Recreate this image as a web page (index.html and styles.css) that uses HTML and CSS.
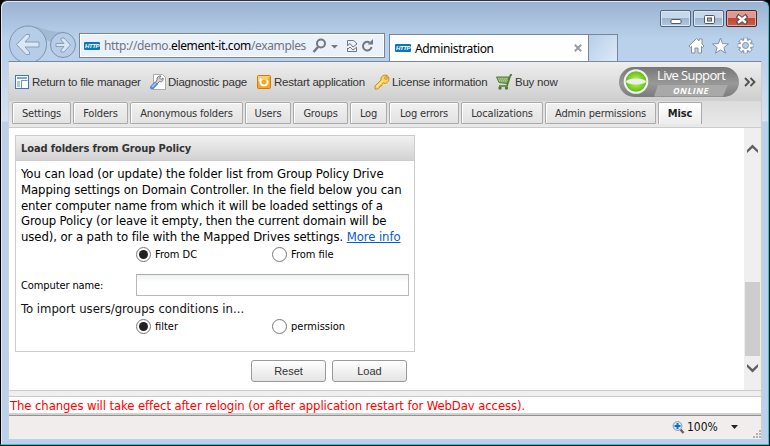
FILE: index.html
```html
<!DOCTYPE html>
<html lang="en">
<head>
<meta charset="utf-8">
<title>Administration</title>
<link rel="stylesheet" href="styles.css">
</head>
<body>
<div class="window">
  <header class="chrome">
    <div class="nav">
      <svg class="navbtns" width="70" height="36" viewBox="0 0 70 36">
        <path d="M27 1 Q42 7 56 7 L45 18 36 14Z" fill="#9cb5cf" opacity=".8"/>
        <g stroke="#8193a8" fill="#b5cde8">
          <circle cx="20" cy="19.500" r="18.500"/><circle cx="55" cy="20" r="12.500"/>
        </g>
        <g fill="#d9e6f5" stroke="#8b9db3" stroke-linejoin="round">
          <path d="M8.500 19.500 L18 9.500 L21.500 9.500 L21.500 12 L17 17 H31 V22 H17 L21.500 27 V29.500 H18Z"/>
          <path d="M62.500 20 L56 13 H53 V15 L56 18.500 H48 V21.500 H56 L53 25 V27 H56Z"/>
        </g>
      </svg>
      <div class="address">
        <span class="http">HTTP</span>
        <span class="url">http://demo.<b>element-it.com</b>/examples</span>
        <svg width="64" height="22" viewBox="0 0 64 22" fill="none" stroke="#74777c">
          <circle cx="9" cy="8.500" r="4" stroke-width="2"/><path d="M6 12 L1.500 17" stroke-width="2.500"/>
          <path d="M19 10 H26 L22.500 13.500Z" fill="#74777c" stroke="none"/>
          <path d="M35.500 10V5.500H41.500L44.500 8V10M35.500 13V16.500H44.500V13"/><path d="M35 11 L38 8.500 41 12 45 9M35 15 L38 12 41 15 45 12"/>
          <path d="M57.500 7.500 A4.300 4.300 0 1 0 59.500 12" stroke-width="2"/><path d="M55.500 9.500H61V4Z" fill="#74777c" stroke="none"/>
        </svg>
      </div>
      <div class="browsertab"><span class="http">HTTP</span><span class="pagetitle">Administration</span>
        <svg width="8" height="8" viewBox="0 0 8 8"><path d="M.8.8 7.200 7.200M7.200.8.8 7.200" stroke="#9c9c9c" stroke-width="2"/></svg>
      </div>
      <div class="newtab"></div>
    </div>
    <div class="right">
      <div class="winbtns">
        <div class="wb"><svg width="12" height="12"><rect x="1" y="6.500" width="10" height="4" rx="1" fill="#fff" stroke="#53575f"/></svg></div>
        <div class="wb"><svg width="12" height="12"><rect x="1.500" y="2.500" width="10" height="8" rx="1" fill="#fff" stroke="#53575f"/><rect x="4.500" y="5" width="4" height="3" fill="#9cb5d2" stroke="#53575f"/></svg></div>
        <div class="wb close"><svg width="12" height="12"><path d="M1 2.500 11 10.500M11 2.500 1 10.500" stroke="#57484b" stroke-width="4.200"/><path d="M2 3.300 10 9.700M10 3.300 2 9.700" stroke="#fff" stroke-width="2.400"/></svg></div>
      </div>
      <svg class="tools" width="66" height="18" viewBox="0 0 66 18" fill="#fff" stroke="#8391a2" stroke-linejoin="round">
        <path d="M1 9 8.500 1.500 11 4 V2 H14 V7 L16 9 14.500 10.500 13.500 9.500 V16 H10 V11 H7 V16 H3.500 V9.500 L2.500 10.500Z"/>
        <path d="M32.500 1 34.600 6.600 40.500 6.800 35.900 10.500 37.500 16.200 32.500 12.900 27.500 16.200 29.100 10.500 24.500 6.800 30.400 6.600Z"/>
        <g transform="translate(57.500 8.500)"><path id="gear" stroke-width="4.600" d="M0-5.500V5.500M-5.500 0H5.500M-3.900-3.900 3.900 3.900M-3.900 3.900 3.900-3.900" stroke-linecap="square"/><circle r="5.500"/><path d="M0-6V6M-6 0H6M-4.200-4.200 4.200 4.200M-4.200 4.200 4.200-4.200" stroke="#fff" stroke-width="2.600" stroke-linecap="square"/><circle r="5" stroke="none"/><circle r="3" fill="#b5cde8"/></g>
      </svg>
    </div>
  </header>

  <main class="viewport">
    <nav class="toolbar">
      <a class="tool return"><svg width="14" height="14"><rect x=".5" y=".5" width="13" height="13" fill="#fff" stroke="#3977bd"/><path d="M2 2H12V4H2Z" fill="#75a8df"/><path d="M2 6H5V12H2Z" fill="#a8c9ed"/><path d="M6 5.500H12.500M6.500 6V13" stroke="#6c98c7"/></svg><span>Return to file manager</span></a>
      <a class="tool diagnostic"><svg width="16" height="16"><path d="M3.500.5H12.500L15.500 3.500V15.500H3.500Z" fill="#fff" stroke="#aaa"/><path d="M2 13.500 6 9.500" stroke="#5689d4" stroke-width="4" stroke-linecap="round"/><path d="M2 13 6 9" stroke="#a9cbf6" stroke-width="1.500"/><path d="M5.500 8.500 7 6C6.500 3 9 1.500 11 2L9.500 4 11 5.500 13 4C13.500 6.500 12 8.500 9.500 7.500L7 10Z" fill="#d4d4d4" stroke="#777"/></svg><span>Diagnostic page</span></a>
      <a class="tool restart"><svg width="14" height="14"><rect x=".5" y=".5" width="13" height="13" rx="1" fill="#f5a721" stroke="#d87807"/><path d="M1 1H13L10 5H3L1 7Z" fill="#f8cc73"/><path d="M4 4C2.500 8 4 10.500 7 10.500S11.500 7.500 10 5" fill="none" stroke="#fff" stroke-width="2"/><path d="M2 6 3 2.500 6 5Z" fill="#fff"/></svg><span>Restart application</span></a>
      <a class="tool license"><svg width="16" height="16"><path d="M1 12 7 6.200C6.500 3 9 .7 12 1.200S16 6 13.500 8.200 10 9 9.500 8.700L8 10.500 7.500 12H6L5.500 13.500 3.500 15H1Z" fill="#fad856" stroke="#c68a19"/><circle cx="12" cy="4" r="1.300" fill="#fff" stroke="#bd821a"/><path d="M2.500 13 8 7.500" stroke="#fff4aa"/></svg><span>License information</span></a>
      <a class="tool buy"><svg width="16" height="16" fill="none"><path d="M.5 3 13 3 11 9.500 3 8.500Z" fill="#8eac6a" stroke="#4e7e34"/><path d="M2 4.800H12M3 6.800H12" stroke="#d3e1be" stroke-width=".7" stroke-dasharray="1"/><path d="M16 .8 14.500 1 11 12H3" stroke="#4e7e34" stroke-width="1.700"/><circle cx="4" cy="14" r="1.700" fill="#4e7e34"/><circle cx="10.500" cy="14" r="1.700" fill="#4e7e34"/></svg><span>Buy now</span></a>
      <div class="support">
        <svg width="29" height="30"><defs><radialGradient id="g"><stop offset="0" stop-color="#c9ff65"/><stop offset="1" stop-color="#56b70b"/></radialGradient></defs><circle cx="15" cy="14.500" r="11.300" fill="url(#g)" stroke="#f1f1f1" stroke-width="2"/><ellipse cx="15" cy="14.500" rx="10" ry="3" fill="#ededed"/></svg>
        <div class="supporttext"><div class="live">Live Support</div><div class="online"><span>ONLINE</span></div></div>
      </div>
      <svg class="more" width="12" height="10" fill="none" stroke="#505050" stroke-width="1.800"><path d="M1 1 5 5 1 9M6.500 1 10.500 5 6.500 9"/></svg>
    </nav>
    <nav class="tabs">
      <a class="tab t1"><span>Settings</span></a><a class="tab t2"><span>Folders</span></a><a class="tab t3"><span>Anonymous folders</span></a><a class="tab t4"><span>Users</span></a><a class="tab t5"><span>Groups</span></a><a class="tab t6"><span>Log</span></a><a class="tab t7"><span>Log errors</span></a><a class="tab t8"><span>Localizations</span></a><a class="tab t9"><span>Admin permissions</span></a><a class="tab t10 active"><span>Misc</span></a>
    </nav>
    <section class="content">
      <div class="page">
        <div class="panel">
          <h1><span>Load folders from Group Policy</span></h1>
          <div class="intro">
            <div class="l1">You can load (or update) the folder list from Group Policy Drive</div>
            <div class="l2">Mapping settings on Domain Controller. In the field below you can</div>
            <div class="l3">enter computer name from which it will be loaded settings of a</div>
            <div class="l4">Group Policy (or leave it empty, then the current domain will be</div>
            <div class="l5">used), or a path to file with the Mapped Drives settings. <a>More info</a></div>
          </div>
          <div class="radios"><label><i class="radio on"></i>From DC</label><label><i class="radio"></i>From file</label></div>
          <div class="field"><label>Computer name:</label><div class="input"></div></div>
          <div class="cond"><span>To import users/groups conditions in...</span></div>
          <div class="radios"><label><i class="radio on"></i>filter</label><label><i class="radio"></i>permission</label></div>
        </div>
        <div class="actions"><div class="button">Reset</div><div class="button">Load</div></div>
      </div>
      <div class="scroll">
        <svg width="11" height="9"><path d="M0 9V6L5.500.5 11 6V9L5.500 4Z" fill="#606060"/></svg>
        <div class="thumb"></div>
        <svg class="down" width="11" height="9"><path d="M0 0V3L5.500 8.500 11 3V0L5.500 5Z" fill="#606060"/></svg>
      </div>
    </section>
    <div class="notice"><span>The changes will take effect after relogin (or after application restart for WebDav access).</span></div>
    <footer class="status">
      <svg width="13" height="13"><path d="M8.500 8.500 11.500 12" stroke="#93562e" stroke-width="2.400"/><circle cx="5.500" cy="5" r="4.400" fill="#d5edff" stroke="#8199b2"/><path d="M5.500 2V8M2.500 5H8.500" stroke="#176cc1" stroke-width="2"/></svg>
      <span>100%</span>
      <svg class="drop" width="7" height="4"><path d="M0 0H7L3.500 4Z" fill="#222"/></svg>
      <svg class="grip" width="9" height="9" fill="#b5b1b1"><path d="M7 1h2v2H7zM4 4h2v2H4zM7 4h2v2H7zM1 7h2v2H1zM4 7h2v2H4zM7 7h2v2H7z"/></svg>
    </footer>
  </main>
</div>
</body>
</html>
```
FILE: styles.css
```css
*{box-sizing:border-box}
body{margin:0;background:#000;font-family:"DejaVu Sans Condensed","Noto Sans",sans-serif;color:#111;overflow:hidden}
svg{display:block;flex:none}
span{white-space:nowrap}
.window{height:445px;width:769px;padding:0 7px 6px 7px;border-top:1px solid #35313b;border-right:1px solid #23cce9;border-bottom:1px solid #23cce9;border-left:1px solid #000;border-radius:7px 7px 0 0;background:linear-gradient(#99b2d1 0,#b9d1ea 38px,#b9d1ea 58px,#d5e3f3 120px,#b9d1ea 121px);box-shadow:inset 1px 1px 0 #dbe7f5}
.chrome{height:60px;display:flex;justify-content:space-between}
.nav{display:flex;align-items:flex-end;height:60px}
.navbtns{margin-top:25px;width:70px;overflow:hidden}
.address{width:306px;height:25px;margin:0 4px 3px 1px;border:1px solid #75869b;box-shadow:inset 0 0 0 1px #fff;background:#eaf1fa;display:flex;align-items:center;padding-left:4px}
.http{font:italic bold 6px/8px "Liberation Sans",sans-serif;letter-spacing:-.4px;background:#0878bd;color:#fff;width:16px;height:8px;border-radius:1px;flex:none;overflow:hidden;text-align:center}
.url{font-family:"Noto Sans",sans-serif;font-size:12px;letter-spacing:-.37px;margin-left:4px;width:207px;color:#6e7580;flex:none}
.url b{font-weight:400;color:#000}
.address svg{margin-left:1px}
.browsertab{height:27px;width:200px;border:1px solid #75869b;border-bottom:0;background:#fefefe;display:flex;align-items:center;padding:0 6px 0 5px}
.pagetitle{font-family:"Noto Sans",sans-serif;font-size:12px;letter-spacing:-.35px;margin:1px 0 0 4px;flex:1;color:#000}
.newtab{height:27px;width:29px;border:1px solid #75869b;border-bottom:0;border-left:0;background:linear-gradient(130deg,#b7cee9,#dce9f7)}
.right{width:100px;display:flex;flex-direction:column;align-items:flex-end}
.winbtns{display:flex;gap:2px;margin:9px 4px 0 0}
.wb{width:31px;height:17px;border:1px solid #53657e;border-radius:2px;background:linear-gradient(#c7d8ea 48%,#9bb5d1 50%,#b2c8df);box-shadow:inset 0 0 0 1px #dce8f4;display:grid;place-items:center}
.wb.close{background:linear-gradient(#df9990 45%,#bd4936 50%,#c95e4b);border-color:#50252a;box-shadow:inset 0 0 0 1px #e3aaa4}
.tools{margin:10px 7px 0 0}
.viewport{width:754px;height:378px;border-top:1px solid #7788a0;border-right:1px solid #cecece;border-left:1px solid #d1d1d1;background:#efefef;display:flex;flex-direction:column}
.toolbar{height:39px;flex:none;background:linear-gradient(#eee,#cecece);display:flex;align-items:center;font:11.500px "Liberation Sans",sans-serif;letter-spacing:-.23px;padding:0 0 0 6px;color:#333}
.tool{display:flex;align-items:center;flex:none;gap:3px}
.return{width:135px}.diagnostic{width:107px;gap:2px}.restart{width:117px}.license{width:122px;gap:2px}.buy{width:123px;gap:3px}
.support{width:120px;height:30px;border-radius:15px;background:linear-gradient(#777,#989898 55%,#7b7b7b);display:flex;flex:none;padding-left:2px}
.supporttext{color:#fff;margin-left:4px;width:74px}
.live{font:13px/16px "Open Sans",sans-serif;letter-spacing:-.65px;white-space:nowrap;margin-left:3px;padding-bottom:2px}
.online{height:12px;background:#a9a9a9;clip-path:polygon(4px 0,100% 0,calc(100% - 5px) 100%,0 100%);font:italic bold 9px/12px "Open Sans",sans-serif;text-align:center;letter-spacing:.6px}
.more{margin-left:5px}
.tabs{height:27px;flex:none;background:linear-gradient(#dcdcdc,#e9e9e9);padding:1px 0 0 3px;display:flex;gap:2px;border-bottom:1px solid #cacaca;font-size:11px;letter-spacing:-.17px;color:#333}
.tab{height:22px;border:1px solid #aaa;border-radius:2px 2px 0 0;background:linear-gradient(#f1f1f1,#e2e2e2);box-shadow:inset 1px 1px #fff;display:flex;align-items:center;justify-content:center;flex:none}
.t1{width:59px}.t2{width:55px}.t3{width:113px}.t4{width:46px}.t5{width:55px}.t6{width:37px}.t7{width:70px}.t8{width:82px}.t9{width:111px}.t10{width:44px}
.tab.active{background:linear-gradient(#fff,#ececec);border-bottom:0;font-weight:700;color:#222}
.content{height:263px;flex:none;background:#fff;display:flex;justify-content:space-between;border-bottom:1px solid #cbcbcb}
.page{padding:7px 0 0 6px;width:410px}
.panel{width:400px;height:217px;border:1px solid #cbcbcb;font-size:13px}
.panel h1{height:25px;margin:0 0 5px;padding:0 5px;background:linear-gradient(#f1f1f1,#d2d2d2);border-bottom:1px solid #ccc;font-size:11px;letter-spacing:-.1px;line-height:25px;color:#333}
.intro{line-height:15.800px;padding-left:5px;white-space:nowrap;height:80px;color:#000}
.l1{letter-spacing:-.07px}.l2,.l5{letter-spacing:-.09px}.l3,.l4{letter-spacing:-.12px}
.intro a{color:#075bca;text-decoration:underline}
.radios{height:17px;padding-left:120px;display:grid;grid-template-columns:136px 120px;font-size:11px;align-items:center;color:#000}
.radios label{display:flex;align-items:center;gap:4px;white-space:nowrap}
.radio{width:15px;height:15px;border:1px solid #777;border-radius:50%;background:#fff;display:grid;place-items:center}
.radio.on:after{content:"";width:9px;height:9px;border-radius:50%;background:#222}
.field{display:flex;align-items:center;height:22px;margin:11px 0 4px;padding-left:5px;font-size:11px;color:#000}
.field label{width:115px;letter-spacing:-.1px}
.input{width:273px;height:22px;border:1px solid #b8b8b8;border-top-color:#aaa;background:linear-gradient(#edf2ef,#fff 7px)}
.cond{height:18px;padding-left:5px;line-height:18px}
.actions{display:flex;gap:6px;padding:8px 0 0 236px}
.button{width:75px;height:22px;border:1px solid #999;border-radius:3px;background:linear-gradient(#fff,#e4e4e4);font:11px/21px "Liberation Sans",sans-serif;text-align:center;color:#333}
.scroll{width:17px;background:#efefef;display:flex;flex-direction:column;align-items:center;padding-top:16px}
.thumb{width:15px;height:74px;background:#cdcdcd;margin-top:129px}
.down{margin-top:8px}
.notice{height:19px;flex:none;margin-top:5px;padding-left:1px;border-top:1px solid #cbcbcb;border-bottom:2px solid #d0d0d0;background:#fff;color:#f00;font-size:13px;letter-spacing:-.11px;line-height:18px}
.status{height:23px;flex:none;background:#f0edec;border-top:1px solid #929292;display:flex;align-items:center;padding-left:663px;font-size:12px;color:#111}
.status span{margin-left:2px;width:30px}.drop{margin-left:14px}.grip{margin:12px 0 0 14px}
```
